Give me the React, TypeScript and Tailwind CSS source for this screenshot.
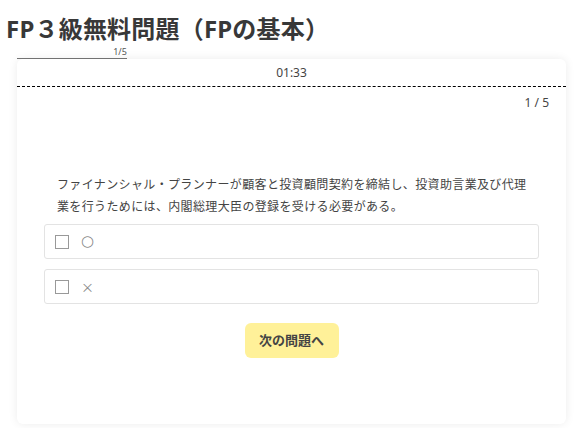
import React from "react";

export default function App() {
  const font = { fontFamily: '"Noto Sans", "Noto Sans CJK JP", sans-serif' };
  const marks = [
    { m: "○", f: '"DejaVu Sans", sans-serif', s: "text-[15px]" },
    { m: "×", f: '"Noto Sans CJK JP", sans-serif', s: "text-[13px]" },
  ];
  return (
    <div className="w-[585px] h-[428px] bg-white overflow-hidden text-[#444]" style={font}>
      <h1 className="pl-[6px] pt-[14px] text-[24px] leading-[30px] font-bold text-[#383838] tracking-[0.2px]">
        FP３級無料問題（FPの基本）
      </h1>
      <div className="ml-[17px] w-[549px]">
        <div className="w-1/5 h-[15px] flex items-end justify-end border-b border-[#777]">
          <span className="text-[9px] leading-[12px] text-[#555]">1/5</span>
        </div>
        <div className="h-[365px] bg-white rounded-[6px] shadow-[0_0_10px_rgba(0,0,0,0.08)]">
          <div className="h-[28px] border-b border-dashed border-black text-center text-[12px] leading-[27px] text-[#444]">
            01:33
          </div>
          <div className="pt-[8px] pr-[17px] text-right text-[12px] leading-[16px] text-[#444]">1 / 5</div>
          <div className="px-[27px] pt-[63px]">
            <p className="pl-[13px] text-[12px] leading-[22px] tracking-[0.03em] text-[#444] whitespace-nowrap">
              ファイナンシャル・プランナーが顧客と投資顧問契約を締結し、投資助言業及び代理
              <br />
              業を行うためには、内閣総理大臣の登録を受ける必要がある。
            </p>
            <div className="mt-[6px] flex flex-col gap-[10px]">
              {marks.map(({ m, f, s }) => (
                <label
                  key={m}
                  className="h-[35px] flex items-center border border-[#e3e3e3] rounded-[3px] pl-[10px]"
                >
                  <span className="w-[14px] h-[14px] border-[1.5px] border-[#999] bg-white" />
                  <span className={`ml-[12px] ${s} leading-none text-[#888]`} style={{ fontFamily: f }}>
                    {m}
                  </span>
                </label>
              ))}
            </div>
            <div className="mt-[19px] flex justify-center">
              <button className="w-[94px] h-[35px] rounded-[6px] bg-[#fff199] text-[13px] font-bold text-[#444]">
                次の問題へ
              </button>
            </div>
          </div>
        </div>
      </div>
    </div>
  );
}
